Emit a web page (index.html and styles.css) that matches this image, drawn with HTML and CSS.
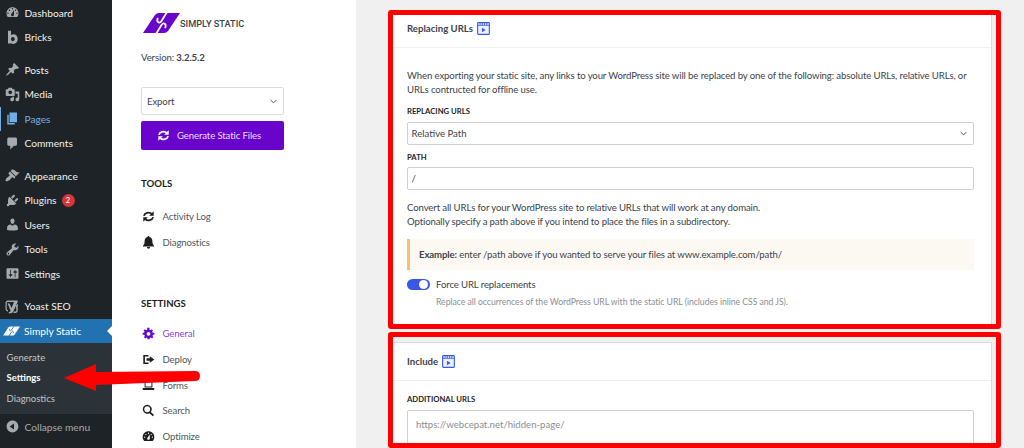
FILE: index.html
```html
<!DOCTYPE html>
<html lang="en">
<head>
<meta charset="utf-8">
<title>Simply Static Settings</title>
<link rel="stylesheet" href="styles.css">
</head>
<body>
<div class="page">
  <nav class="adminbar">
    <ul class="menu">
      <li class="item"><svg class="mi" viewBox="0 0 20 20"><path fill-rule="evenodd" d="M3.76 16h12.48c1.1-1.37 1.76-3.11 1.76-5 0-4.42-3.58-8-8-8s-8 3.58-8 8c0 1.89.66 3.63 1.76 5zM10 4c.55 0 1 .45 1 1s-.45 1-1 1-1-.45-1-1 .45-1 1-1zM6 6c.55 0 1 .45 1 1s-.45 1-1 1-1-.45-1-1 .45-1 1-1zm8 0c.55 0 1 .45 1 1s-.45 1-1 1-1-.45-1-1 .45-1 1-1zm-5.37 5.55L12 7v6c0 1.1-.9 2-2 2s-2-.9-2-2c0-.57.24-1.08.63-1.45zM4 10c.55 0 1 .45 1 1s-.45 1-1 1-1-.45-1-1 .45-1 1-1zm12 0c.55 0 1 .45 1 1s-.45 1-1 1-1-.45-1-1 .45-1 1-1z"/></svg>Dashboard</li>
      <li class="item"><svg class="mi" viewBox="0 0 20 20"><path fill-rule="evenodd" d="M4 1h4v5.6c1-.7 2.1-1 3.2-1 3.3 0 5.8 2.700 5.800 6.500s-2.500 6.500-5.800 6.500c-1.200 0-2.400-.4-3.400-1.200V18H4zm6.400 8.200c-1.400 0-2.400 1.200-2.400 2.900s1 2.900 2.400 2.900 2.600-1.200 2.600-2.900-1.200-2.900-2.600-2.900z"/></svg>Bricks</li>
      <li class="sep"></li>
      <li class="item"><svg class="mi" viewBox="0 0 20 20"><path d="M10.44 3.02l1.82-1.82 6.36 6.35-1.83 1.82c-1.05-.68-2.48-.57-3.41.36l-.75.75c-.92.93-1.04 2.35-.35 3.41l-1.83 1.82-2.41-2.41-2.8 2.79c-.42.42-3.38 2.71-3.8 2.29s1.86-3.39 2.28-3.81l2.79-2.79L4.1 9.36l1.83-1.82c1.05.69 2.48.57 3.4-.36l.75-.75c.93-.92 1.05-2.35.36-3.41z"/></svg>Posts</li>
      <li class="item"><svg class="mi" viewBox="0 0 20 20"><path fill-rule="evenodd" d="M13 11V4c0-.55-.45-1-1-1h-1.670L9 1H5L3.670 3H2c-.55 0-1 .45-1 1v7c0 .55.45 1 1 1h10c.55 0 1-.45 1-1zM7 4.500c1.380 0 2.500 1.120 2.500 2.500S8.380 9.500 7 9.500 4.500 8.380 4.500 7 5.620 4.500 7 4.500zM14 6h5v10.500c0 1.380-1.120 2.500-2.500 2.500S14 17.880 14 16.500s1.120-2.500 2.500-2.500c.17 0 .34.02.5.05V9h-3V6zm-4 8.050V13h2v3.500c0 1.380-1.120 2.500-2.500 2.500S7 17.880 7 16.500 8.120 14 9.500 14c.17 0 .34.02.5.05z"/></svg>Media</li>
      <li class="item current"><svg class="mi" viewBox="0 0 20 20"><path d="M6 15V2h10v13H6zm-1 1h8v2H3V5h2v11z"/></svg>Pages</li>
      <li class="item"><svg class="mi" viewBox="0 0 20 20"><path d="M5 2h9c1.100 0 2 .9 2 2v7c0 1.100-.9 2-2 2h-2l-5 5v-5H5c-1.100 0-2-.9-2-2V4c0-1.100.9-2 2-2z"/></svg>Comments</li>
      <li class="sep"></li>
      <li class="item"><svg class="mi" viewBox="0 0 20 20"><path d="M14.480 11.060L7.410 3.990l1.500-1.500c.5-.56 2.300-.47 3.510.32 1.210.8 1.430 1.280 2.910 2.100 1.180.64 2.450 1.260 4.450.85zm-.71.71L6.700 4.700 4.930 6.470c-.39.39-.39 1.020 0 1.410l1.060 1.060c.39.39.39 1.030 0 1.420-.6.6-1.430 1.110-2.210 1.690-.35.26-.7.53-1.010.84C1.430 13.230.25 16.740 1 17.500c.75.75 4.260-.42 5.600-1.770.31-.31.58-.66.85-1.010.57-.78 1.080-1.610 1.690-2.210.39-.39 1.020-.39 1.410 0l1.060 1.060c.39.39 1.020.39 1.410 0z"/></svg>Appearance</li>
      <li class="item"><svg class="mi" viewBox="0 0 20 20"><path d="M13.110 4.360L9.870 7.600 8 5.730l3.240-3.240c.35-.34 1.050-.2 1.560.32.52.51.66 1.210.31 1.550zm-8 1.770l.91-1.120 9.010 9.010-1.190.84c-.71.71-2.630 1.160-3.820 1.160H6.140L4.900 17.260c-.59.59-1.540.59-2.120 0-.59-.58-.59-1.530 0-2.120l1.240-1.240v-3.880c0-1.130.4-3.190 1.090-3.890zm7.260 3.970l3.240-3.240c.34-.35 1.040-.21 1.550.31.52.51.66 1.210.31 1.550l-3.240 3.250z"/></svg>Plugins<span class="badge">2</span></li>
      <li class="item"><svg class="mi" viewBox="0 0 20 20"><path d="M10 9.250c-2.270 0-2.730-3.440-2.730-3.440C7 4.020 7.820 2 9.970 2c2.160 0 2.980 2.020 2.710 3.810 0 0-.41 3.440-2.680 3.440zm0 2.570L12.720 10c2.390 0 4.520 2.330 4.520 4.530v2.490s-3.650 1.130-7.240 1.130c-3.650 0-7.240-1.130-7.240-1.130v-2.490c0-2.250 1.940-4.480 4.470-4.480z"/></svg>Users</li>
      <li class="item"><svg class="mi" viewBox="0 0 20 20"><path fill-rule="evenodd" d="M16.680 9.770c-1.340 1.340-3.300 1.670-4.950.99l-5.410 6.520c-.99.99-2.590.99-3.580 0s-.99-2.590 0-3.570l6.520-5.420c-.68-1.650-.35-3.610.99-4.950 1.280-1.280 3.120-1.620 4.720-1.060l-2.890 2.890 2.820 2.820 2.860-2.870c.53 1.580.18 3.390-1.080 4.650zM3.810 16.210c.4.39 1.040.39 1.430 0 .4-.4.4-1.040 0-1.430-.39-.4-1.030-.4-1.430 0-.39.39-.39 1.030 0 1.430z"/></svg>Tools</li>
      <li class="item"><svg class="mi" viewBox="0 0 20 20"><path fill-rule="evenodd" d="M18 16V4c0-.55-.45-1-1-1H3c-.55 0-1 .45-1 1v12c0 .55.45 1 1 1h14c.55 0 1-.45 1-1zM8 11h1c.55 0 1 .45 1 1s-.45 1-1 1H8v1.500c0 .28-.22.5-.5.5s-.5-.22-.5-.5V13H6c-.55 0-1-.45-1-1s.45-1 1-1h1V5.500c0-.28.22-.5.5-.5s.5.22.5.5V11zm5-2h-1c-.55 0-1-.45-1-1s.45-1 1-1h1V5.500c0-.28.22-.5.5-.5s.5.22.5.5V7h1c.55 0 1 .45 1 1s-.45 1-1 1h-1v5.500c0 .28-.22.5-.5.5s-.5-.22-.5-.5V9z"/></svg>Settings</li>
      <li class="sep"></li>
      <li class="item"><svg class="mi" viewBox="0 0 20 20"><path fill-rule="evenodd" d="M4 2h13v1.500l-5.500 12c-.8 1.800-1.800 2.800-3.500 3.500H5v-1.800c1.200 0 2-.4 2.600-1.200L3.500 6H6l2.700 6L12 4H4c-1 0-1.700.7-1.700 1.700V13c0 1 .6 1.600 1.700 1.700v1.800C2 16.400.7 15 .7 13V5.700C.7 3.500 2 2 4 2zm10.500 4.500H17V15c0 2-1.300 3.500-3.500 3.500H11l.8-1.800h1.700c1 0 1.700-.7 1.700-1.700z"/></svg>Yoast SEO</li>
      <li class="item active"><svg class="mi ss" viewBox="0 0 37 20"><path d="M0 20L12 2Q13.500 0 16 0H37L25 18Q23.500 20 21 20z"/><path class="cut" d="M24 -1L18.500 8Q17 10.500 15 9Q13.500 7.500 15 5M13 21L18.500 12Q20 9.500 22 11Q23.500 12.500 22 15"/></svg>Simply Static</li>
      <li class="submenu">
        <div class="subitem">Generate</div>
        <div class="subitem on">Settings</div>
        <div class="subitem">Diagnostics</div>
      </li>
      <li class="item collapse"><svg class="mi" viewBox="0 0 20 20"><path fill-rule="evenodd" d="M10 2.160c4.330 0 7.840 3.510 7.840 7.840s-3.510 7.840-7.840 7.840S2.160 14.330 2.160 10 5.710 2.160 10 2.160zm2 11.720V6.120L6.180 9.970z"/></svg>Collapse menu</li>
    </ul>
  </nav>

  <aside class="plugin">
    <div class="brand">
      <svg class="brand-logo" viewBox="0 0 37 20"><path d="M0 20L12 2Q13.500 0 16 0H37L25 18Q23.500 20 21 20z"/><path class="cut" d="M24 -1L18.500 8Q17 10.500 15 9Q13.500 7.500 15 5M13 21L18.500 12Q20 9.500 22 11Q23.500 12.500 22 15"/></svg>
      <span class="brand-name">SIMPLY STATIC</span>
    </div>
    <p class="version">Version: <b>3.2.5.2</b></p>
    <div class="picker"><span>Export</span><svg class="chev" viewBox="0 0 10 6"><path d="M1 1l4 4 4-4"/></svg></div>
    <button class="generate" type="button"><svg class="gen-icon" viewBox="0 0 20 20"><path class="arc" d="M3 9a7 6 0 0 1 12-3"/><path class="arc" d="M17 11a7 6 0 0 1-12 3"/><path d="M18 2v7h-7zM2 18v-7h7z"/></svg>Generate Static Files</button>

    <h3 class="side-title tools">TOOLS</h3>
    <ul class="side-list">
      <li><svg class="si" viewBox="0 0 20 20"><path class="arc" d="M3 9a7 6 0 0 1 12-3"/><path class="arc" d="M17 11a7 6 0 0 1-12 3"/><path d="M18 2v7h-7zM2 18v-7h7z"/></svg>Activity Log</li>
      <li><svg class="si" viewBox="0 0 20 20"><path d="M10 0c1 0 1.500.7 1.500 1.600C14.500 2.300 16 5 16 8c0 4 1 5.500 2.500 7v1h-17v-1C3 13.500 4 12 4 8c0-3 1.500-5.700 4.500-6.400C8.500.7 9 0 10 0zM7.500 17h5a2.500 2.500 0 0 1-5 0z"/></svg>Diagnostics</li>
    </ul>

    <h3 class="side-title settings">SETTINGS</h3>
    <ul class="side-list list-settings">
      <li class="sel"><svg class="si" viewBox="0 0 20 20"><path fill-rule="evenodd" d="M19 12h-2.200c-.17.7-.44 1.350-.81 1.930l1.540 1.540-2.100 2.100-1.540-1.540c-.58.36-1.230.63-1.910.79V19H8.500v-2.180c-.68-.16-1.330-.43-1.910-.79l-1.540 1.540-2.120-2.120 1.540-1.540c-.36-.58-.63-1.230-.79-1.910H1V9h2.170c.16-.7.44-1.350.8-1.940L2.430 5.520l2.100-2.100 1.540 1.540c.58-.37 1.240-.64 1.930-.81V1h3.500v3.180c.68.16 1.330.43 1.910.79l1.540-1.540 2.120 2.120-1.540 1.540c.36.59.64 1.240.8 1.940H19V12zm-9 1.500a3 3 0 1 0 0-6 3 3 0 0 0 0 6z"/></svg>General</li>
      <li><svg class="si" viewBox="0 0 20 20"><path fill-rule="evenodd" d="M2 3h8v2.500H4.500v9H10V17H2zM12 5l7 5-7 5v-3H7V8h5z"/></svg>Deploy</li>
      <li><svg class="si" viewBox="0 0 20 20"><path fill-rule="evenodd" d="M4 3h12v10H4zm1.500 1.500v7h9v-7zM1 14h18v1.500q0 1.500-1.500 1.500h-15Q1 17 1 15.500z"/></svg>Forms</li>
      <li><svg class="si" viewBox="0 0 20 20"><path fill-rule="evenodd" d="M8 1a7 7 0 0 1 5.600 11.200l4.900 4.900-1.900 1.900-4.900-4.900A7 7 0 1 1 8 1zm0 2.500a4.500 4.500 0 1 0 0 9 4.500 4.500 0 0 0 0-9z"/></svg>Search</li>
      <li><svg class="si" viewBox="0 0 20 20"><path fill-rule="evenodd" d="M3.760 17h12.480C17.340 15.630 19 13.500 19 11c0-4.970-4.030-9-9-9s-9 4.030-9 9c0 2.500 1.660 4.630 2.760 6zM10 4c.55 0 1 .45 1 1s-.45 1-1 1-1-.45-1-1 .45-1 1-1zM6 6c.55 0 1 .45 1 1s-.45 1-1 1-1-.45-1-1 .45-1 1-1zm8 0c.55 0 1 .45 1 1s-.45 1-1 1-1-.45-1-1 .45-1 1-1zm-5.370 5.550L12 7v6c0 1.100-.9 2-2 2s-2-.9-2-2c0-.57.24-1.080.63-1.450zM4 10c.55 0 1 .45 1 1s-.45 1-1 1-1-.45-1-1 .45-1 1-1zm12 0c.55 0 1 .45 1 1s-.45 1-1 1-1-.45-1-1 .45-1 1-1z"/></svg>Optimize</li>
    </ul>
  </aside>

  <main class="content">
    <section class="card first">
      <header class="card-head"><span>Replacing URLs</span><svg class="film" viewBox="0 0 14 14"><rect x=".7" y=".7" width="12.600" height="12.600" rx=".8"/><path class="strip" d="M1 3.600h12M3.300 1v2.300M5.700 1v2.300M8.100 1v2.300M10.500 1v2.300"/><path class="play" d="M5.300 6.200l4 2.400-4 2.400z"/></svg></header>
      <div class="card-body">
        <p class="para">When exporting your static site, any links to your WordPress site will be replaced by one of the following: absolute URLs, relative URLs, or URLs contructed for offline use.</p>
        <div class="label label-a">REPLACING URLS</div>
        <div class="field field-select"><span>Relative Path</span><svg class="chev" viewBox="0 0 10 6"><path d="M1 1l4 4 4-4"/></svg></div>
        <div class="label label-b">PATH</div>
        <input class="field field-input" type="text" value="/">
        <p class="para para-c">Convert all URLs for your WordPress site to relative URLs that will work at any domain.<br>Optionally specify a path above if you intend to place the files in a subdirectory.</p>
        <div class="notice"><b>Example:</b> enter /path above if you wanted to serve your files at www.example.com/path/</div>
        <div class="toggle-row"><span class="toggle"><span class="knob"></span></span><span>Force URL replacements</span></div>
        <p class="hint">Replace all occurrences of the WordPress URL with the static URL (includes inline CSS and JS).</p>
      </div>
    </section>
    <section class="card second">
      <header class="card-head"><span>Include</span><svg class="film" viewBox="0 0 14 14"><rect x=".7" y=".7" width="12.600" height="12.600" rx=".8"/><path class="strip" d="M1 3.600h12M3.300 1v2.300M5.700 1v2.300M8.100 1v2.300M10.500 1v2.300"/><path class="play" d="M5.300 6.200l4 2.400-4 2.400z"/></svg></header>
      <div class="card-body body-two">
        <div class="label">ADDITIONAL URLS</div>
        <textarea class="field field-area" placeholder="https://webcepat.net/hidden-page/"></textarea>
      </div>
    </section>
  </main>

  <div class="frame frame-one"></div>
  <div class="frame frame-two"></div>
  <svg class="arrow" viewBox="0 0 140 30"><path d="M0 15L32 1v8L131 8q5 0 5 5t-5 5L32 22v6z"/></svg>
</div>
</body>
</html>
```
FILE: styles.css
```css
* { box-sizing: border-box; }
html, body { margin: 0; padding: 0; height: 448px; overflow: hidden; }
body { font-family: Lato, "Open Sans", sans-serif; background: #f0f0f1; color: #3c434a; }
ul { list-style: none; margin: 0; padding: 0; }
p, h3 { margin: 0; }

.page { position: relative; display: flex; width: 1024px; height: 448px; overflow: hidden; }

/* admin sidebar */
.adminbar { flex: 0 0 112px; background: #1d2327; padding-top: .5px; }
.item { display: flex; align-items: center; height: 24.500px; padding-left: 5px; font-size: 10.200px; color: #f0f0f1; }
.mi { flex: none; width: 15px; height: 15px; margin-right: 4.500px; fill: #a7aaad; }
.mi.ss { width: 17px; height: 10px; margin: 0 4px 0 -2px; }
.sep { height: 8px; }
.current { color: #72aee6; box-shadow: inset 1px 0 0 #72aee6; }
.current .mi { fill: #72aee6; }
.active { position: relative; background: #2271b1; color: #fff; }
.active .mi { fill: #fff; }
.active::after { content: ""; position: absolute; right: 0; top: 50%; margin-top: -5px; border: 5px solid transparent; border-right-color: #fff; border-left-width: 0; }
.badge { display: inline-flex; align-items: center; justify-content: center; width: 13px; height: 13px; margin-left: 5px; border-radius: 50%; background: #d63638; color: #fff; font-size: 7.500px; }
.submenu { background: #2c3338; padding: 4.500px 0; }
.subitem { height: 20.500px; line-height: 20.500px; padding-left: 6.500px; font-size: 9.500px; color: #c3c4c7; }
.subitem.on { color: #fff; font-weight: 700; }
.collapse { height: 26px; color: #a7aaad; }
.cut { fill: none; stroke-width: 1.800; stroke: #fff; }
.active .cut { stroke: #2271b1; fill: none; }

/* plugin panel */
.plugin { flex: 0 0 244px; background: #fff; padding: 13px 0 0 29px; letter-spacing: -.12px; }
.brand { display: flex; align-items: center; height: 20px; padding-left: 2px; }
.brand-logo { width: 37px; height: 20px; fill: #6804cc; }
.brand-name { font: 500 9.200px Roboto, sans-serif; color: #3c434a; letter-spacing: 0; }
.version { margin-top: 17px; height: 15px; line-height: 15px; font-size: 9.600px; }
.version b { font-weight: 700; }
.picker { display: flex; align-items: center; justify-content: space-between; width: 143px; height: 28px; margin-top: 22px; padding: 0 6px 0 5px; background: #fff; border: 1px solid #dcdcde; border-radius: 2px; font-size: 9.600px; }
.chev { width: 7px; height: 5px; fill: none; stroke: #3c434a; stroke-width: 1.300; }
.generate { display: flex; align-items: center; width: 143px; height: 29px; margin-top: 6px; padding: 0 0 0 16px; border: 0; border-radius: 2px; background: #6804cc; color: #ecdffa; font: 9.600px Lato, "Open Sans", sans-serif; letter-spacing: -.12px; }
.gen-icon { width: 13px; height: 13px; margin-right: 7px; fill: #fff; }
.gen-icon .arc, .si .arc { fill: none; stroke: currentColor; stroke-width: 2.800; }
.gen-icon .arc { stroke: #fff; }
.side-title { height: 14px; line-height: 14px; font-size: 9.600px; font-weight: 700; color: #1e1e1e; letter-spacing: 0; }
.tools { margin-top: 27px; }
.settings { margin-top: 41px; }
.side-list { margin-top: 13px; }
.list-settings { margin-top: 10px; }
.side-list li { display: flex; align-items: center; height: 25.800px; font-size: 9.600px; color: #50575e; }
.si { flex: none; width: 13px; height: 13px; margin: 0 7.500px 0 1px; fill: #1e1e1e; color: #1e1e1e; }
.side-list .sel { color: #8c3fe0; }
.sel .si { fill: #6804cc; }

/* main content */
.content { flex: 1; padding: 10px 0 0 35px; }
.card { width: 601px; background: #fff; border-right: 1px solid #dcdcde; }
.first { height: 316px; }
.second { margin-top: 16px; height: 200px; border-top: 1px solid #dcdcde; }
.card-head { display: flex; align-items: center; gap: 3.500px; height: 37.500px; padding-left: 16px; padding-top: 1px; border-bottom: 1px solid #f0f0f1; font-size: 9.600px; font-weight: 700; color: #3c434a; }
.film { width: 13px; height: 13px; }
.film rect { fill: #eef1fd; stroke: #3858e9; stroke-width: 1.200; }
.film .strip { fill: none; stroke: #3858e9; stroke-width: .9; }
.film .play { fill: #3858e9; }
.card-body { padding: 21px 17px 0 16px; }
.para { font-size: 9.600px; line-height: 14px; color: #3c434a; letter-spacing: -.12px; }
.label { height: 12px; line-height: 12px; font-size: 7.700px; font-weight: 700; color: #1e1e1e; }
.label-a { margin-top: 8px; }
.label-b { margin-top: 6px; }
.field { display: flex; align-items: center; justify-content: space-between; width: 567px; height: 23px; margin-top: 5px; padding: 0 6px 0 3.500px; background: #fff; border: 1px solid #cfd0d2; border-radius: 2px; font: 9.600px Lato, "Open Sans", sans-serif; color: #3c434a; outline: 0; }
.field-input { margin-top: 4px; }
.field-area { display: block; height: 60px; padding: 8px; resize: none; }
.field-area::placeholder { color: #8c8f94; opacity: 1; }
.para-c { margin-top: 11px; }
.notice { height: 31px; line-height: 31px; margin-top: 10px; width: 567px; padding-left: 9px; background: #fcf9f3; border-left: 3px solid #f6c26b; font-size: 9.600px; color: #3c434a; letter-spacing: -.12px; }
.notice b { font-weight: 700; }
.toggle-row { display: flex; align-items: center; gap: 6px; margin-top: 9px; height: 11px; font-size: 9.600px; letter-spacing: -.12px; }
.toggle { position: relative; display: block; width: 23px; height: 11px; border-radius: 6px; background: #3858e9; }
.knob { position: absolute; right: 2px; top: 1px; width: 9px; height: 9px; border-radius: 50%; background: #fff; }
.hint { margin: 5px 0 0 29px; height: 14px; line-height: 14px; font-size: 8.700px; color: #8c8f94; letter-spacing: -.05px; }
.body-two { padding-top: 12px; }

/* annotations over the screenshot */
.frame { position: absolute; left: 388px; width: 613px; border: 5.500px solid #ff0000; border-radius: 3px; }
.frame-one { top: 10px; height: 319px; }
.frame-two { top: 332px; height: 116px; }
.arrow { position: absolute; left: 64px; top: 363px; width: 140px; height: 30px; fill: #ff0000; }
```
